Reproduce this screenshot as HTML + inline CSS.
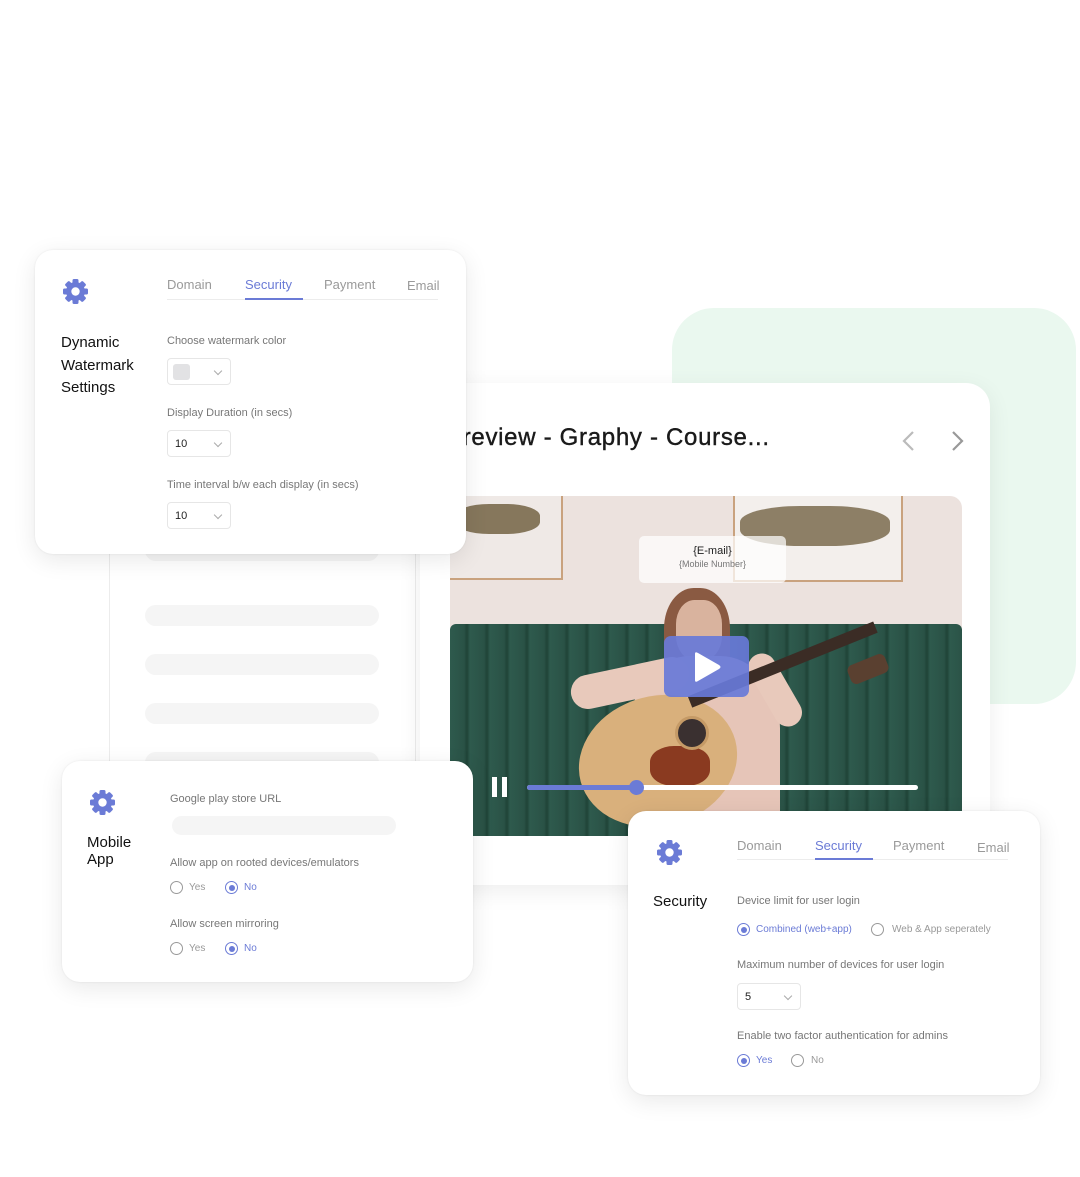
<!DOCTYPE html>
<html><head><meta charset="utf-8"><style>
*{box-sizing:border-box;margin:0;padding:0}
body{width:1080px;height:1177px;background:#fff;position:relative;overflow:hidden;font-family:"Liberation Sans","DejaVu Sans",sans-serif}
.abs{position:absolute}
.card{position:absolute;background:#fff;border-radius:18px;box-shadow:0 6px 24px rgba(0,0,0,.09),0 0 2px rgba(0,0,0,.08)}
.t{position:absolute;white-space:nowrap}
.lbl{font-size:11px;color:#777}
.tab{font-size:13px;color:#9a9a9a}
.tab.on{color:#6b7bd6}
.sel{position:absolute;width:64px;height:27px;border:1px solid #e6e6e6;border-radius:4px;background:#fff;font-size:11px;color:#222}
.sel span{position:absolute;left:7px;top:7px}
.chev{position:absolute;right:9px;top:9px;width:6px;height:6px;border-right:1px solid #aaa;border-bottom:1px solid #aaa;transform:rotate(45deg)}
.radio{position:absolute;width:13px;height:13px;border:1px solid #999;border-radius:50%}
.radio.on{border-color:#6b7bd6}
.radio.on:after{content:"";position:absolute;left:2.5px;top:2.5px;width:6px;height:6px;border-radius:50%;background:#6b7bd6}
.rt{position:absolute;font-size:10px;color:#999}
.rt.on{color:#6b7bd6}
.bar{position:absolute;background:#f5f5f5;border-radius:11px;height:21px}
.h{font-size:15px;color:#111;line-height:22.5px}
</style></head><body>

<div class="abs" style="left:672px;top:308px;width:404px;height:396px;background:#eaf8ef;border-radius:42px"></div>

<div class="abs" style="left:109px;top:530px;width:307px;height:250px;background:#fff;border:1px solid #ececec;border-top:none"></div>
<div class="bar" style="left:145px;top:540px;width:234px"></div>
<div class="bar" style="left:145px;top:605px;width:234px"></div>
<div class="bar" style="left:145px;top:654px;width:234px"></div>
<div class="bar" style="left:145px;top:703px;width:234px"></div>
<div class="bar" style="left:145px;top:752px;width:234px"></div>

<div class="card" style="left:420px;top:383px;width:570px;height:502px;border-radius:24px;box-shadow:0 6px 24px rgba(0,0,0,.07)"></div>
<div class="t" style="left:446px;top:424px;font-size:24px;color:#1a1a1a;letter-spacing:0.7px;-webkit-text-stroke:0.4px #1a1a1a">Preview - Graphy - Course...</div>
<svg class="abs" style="left:900px;top:430px" width="70" height="22"><path d="M13 2 L4 11 L13 20" stroke="#bbb" stroke-width="2.2" fill="none"/><path d="M53 2 L62 11 L53 20" stroke="#999" stroke-width="2.2" fill="none"/></svg>

<div class="abs" style="left:450px;top:496px;width:512px;height:340px;overflow:hidden;border-radius:0 12px 0 0;background:#ece2de">
  <div class="abs" style="left:-5px;top:-5px;width:118px;height:89px;border:2px solid #c9a27e;background:#efe9e6"></div>
  <div class="abs" style="left:5px;top:8px;width:85px;height:30px;background:#6b5a3a;border-radius:40%;opacity:.8"></div>
  <div class="abs" style="left:283px;top:-5px;width:170px;height:91px;border:2px solid #c9a27e;background:#f3efec"></div>
  <div class="abs" style="left:290px;top:10px;width:150px;height:40px;background:#6b5a3a;border-radius:40%;opacity:.75"></div>
  <div class="abs" style="left:0;top:128px;width:512px;height:212px;background:repeating-linear-gradient(90deg,#2e5a4d 0,#2a5246 14px,#1f4337 17px,#2e5a4d 20px);border-radius:6px 6px 0 0"></div>
  <div class="abs" style="left:214px;top:92px;width:66px;height:90px;background:#8a5a42;border-radius:45% 45% 20% 20%"></div>
  <div class="abs" style="left:226px;top:104px;width:46px;height:60px;background:#d9b39e;border-radius:40%"></div>
  <div class="abs" style="left:180px;top:160px;width:150px;height:180px;background:#e6c5b8;border-radius:40% 40% 10% 10%"></div>
  <div class="abs" style="left:120px;top:170px;width:120px;height:34px;background:#e8c9bb;border-radius:18px;transform:rotate(-12deg)"></div>
  <div class="abs" style="left:285px;top:180px;width:80px;height:28px;background:#e8c9bb;border-radius:14px;transform:rotate(60deg)"></div>
  <div class="abs" style="left:128px;top:200px;width:160px;height:130px;background:#d9b07c;border-radius:50%;transform:rotate(-15deg)"></div>
  <div class="abs" style="left:200px;top:250px;width:60px;height:40px;background:#8a3a20;border-radius:40%"></div>
  <div class="abs" style="left:225px;top:220px;width:34px;height:34px;background:#3a3030;border-radius:50%;border:3px solid #c59a66"></div>
  <div class="abs" style="left:240px;top:200px;width:200px;height:12px;background:#3b2c25;transform:rotate(-22deg);transform-origin:left"></div>
  <div class="abs" style="left:398px;top:163px;width:40px;height:20px;background:#5a4030;border-radius:6px;transform:rotate(-22deg)"></div>
  <div class="abs" style="left:189px;top:40px;width:147px;height:47px;background:rgba(255,255,255,.72);border-radius:5px;text-align:center">
    <div style="font-size:11px;color:#222;margin-top:9px">{E-mail}</div>
    <div style="font-size:9px;color:#777;margin-top:2px">{Mobile Number}</div>
  </div>
  <div class="abs" style="left:214px;top:140px;width:85px;height:61px;background:rgba(104,122,216,.92);border-radius:7px"></div>
  <svg class="abs" style="left:240px;top:154px" width="34" height="34"><path d="M5 4 Q5 1 8 3 L29 15 Q32 17 29 19 L8 31 Q5 33 5 30 Z" fill="#fff"/></svg>
  <div class="abs" style="left:42px;top:281px;width:5px;height:20px;background:#fff"></div>
  <div class="abs" style="left:52px;top:281px;width:5px;height:20px;background:#fff"></div>
  <div class="abs" style="left:77px;top:289px;width:391px;height:5px;background:#fff;border-radius:3px"></div>
  <div class="abs" style="left:77px;top:289px;width:110px;height:5px;background:#6b7bd6;border-radius:3px"></div>
  <div class="abs" style="left:179px;top:284px;width:15px;height:15px;background:#6b7bd6;border-radius:50%"></div>
</div>

<svg width="0" height="0" style="position:absolute"><defs>
<g id="gear" fill="#6b7bd6">
<circle cx="13.5" cy="13.5" r="9.5"/>
<rect x="10.5" y="1" width="6" height="25" rx="1.5"/>
<rect x="10.5" y="1" width="6" height="25" rx="1.5" transform="rotate(45 13.5 13.5)"/>
<rect x="10.5" y="1" width="6" height="25" rx="1.5" transform="rotate(90 13.5 13.5)"/>
<rect x="10.5" y="1" width="6" height="25" rx="1.5" transform="rotate(135 13.5 13.5)"/>
<circle cx="13.5" cy="13.5" r="4.2" fill="#fff"/>
</g>
</defs></svg>

<div class="card" style="left:35px;top:250px;width:431px;height:304px">
  <svg class="abs" style="left:27px;top:28px" width="27" height="27"><use href="#gear"/></svg>
  <div class="t tab" style="left:132px;top:27px">Domain</div>
  <div class="t tab on" style="left:210px;top:27px">Security</div>
  <div class="t tab" style="left:289px;top:27px">Payment</div>
  <div class="t tab" style="left:372px;top:28px">Email</div>
  <div class="abs" style="left:132px;top:49px;width:271px;height:1px;background:#ececec"></div>
  <div class="abs" style="left:210px;top:48px;width:58px;height:2px;background:#6b7bd6"></div>
  <div class="t h" style="left:26px;top:82px">Dynamic<br>Watermark<br>Settings</div>
  <div class="t lbl" style="left:132px;top:85px">Choose watermark color</div>
  <div class="sel" style="left:132px;top:108px"><div class="abs" style="left:5px;top:5px;width:17px;height:16px;background:#e2e2e4;border-radius:3px"></div><div class="chev"></div></div>
  <div class="t lbl" style="left:132px;top:157px">Display Duration (in secs)</div>
  <div class="sel" style="left:132px;top:180px"><span>10</span><div class="chev"></div></div>
  <div class="t lbl" style="left:132px;top:229px">Time interval b/w each display (in secs)</div>
  <div class="sel" style="left:132px;top:252px"><span>10</span><div class="chev"></div></div>
</div>

<div class="card" style="left:62px;top:761px;width:411px;height:221px">
  <svg class="abs" style="left:27px;top:28px" width="27" height="27"><use href="#gear"/></svg>
  <div class="t h" style="left:25px;top:73px;line-height:17px">Mobile<br>App</div>
  <div class="t lbl" style="left:108px;top:32px">Google play store URL</div>
  <div class="bar" style="left:110px;top:55px;width:224px;height:19px"></div>
  <div class="t lbl" style="left:108px;top:96px">Allow app on rooted devices/emulators</div>
  <div class="radio" style="left:108px;top:120px"></div><div class="rt" style="left:127px;top:121px">Yes</div>
  <div class="radio on" style="left:163px;top:120px"></div><div class="rt on" style="left:182px;top:121px">No</div>
  <div class="t lbl" style="left:108px;top:157px">Allow screen mirroring</div>
  <div class="radio" style="left:108px;top:181px"></div><div class="rt" style="left:127px;top:182px">Yes</div>
  <div class="radio on" style="left:163px;top:181px"></div><div class="rt on" style="left:182px;top:182px">No</div>
</div>

<div class="card" style="left:628px;top:811px;width:412px;height:284px">
  <svg class="abs" style="left:28px;top:28px" width="27" height="27"><use href="#gear"/></svg>
  <div class="t tab" style="left:109px;top:27px">Domain</div>
  <div class="t tab on" style="left:187px;top:27px">Security</div>
  <div class="t tab" style="left:265px;top:27px">Payment</div>
  <div class="t tab" style="left:349px;top:29px">Email</div>
  <div class="abs" style="left:109px;top:48px;width:271px;height:1px;background:#ececec"></div>
  <div class="abs" style="left:187px;top:47px;width:58px;height:2px;background:#6b7bd6"></div>
  <div class="t h" style="left:25px;top:80px">Security</div>
  <div class="t lbl" style="left:109px;top:84px">Device limit for user login</div>
  <div class="radio on" style="left:109px;top:112px"></div><div class="rt on" style="left:128px;top:113px">Combined (web+app)</div>
  <div class="radio" style="left:243px;top:112px"></div><div class="rt" style="left:264px;top:113px">Web &amp; App seperately</div>
  <div class="t lbl" style="left:109px;top:148px">Maximum number of devices for user login</div>
  <div class="sel" style="left:109px;top:172px"><span>5</span><div class="chev"></div></div>
  <div class="t lbl" style="left:109px;top:219px">Enable two factor authentication for admins</div>
  <div class="radio on" style="left:109px;top:243px"></div><div class="rt on" style="left:128px;top:244px">Yes</div>
  <div class="radio" style="left:163px;top:243px"></div><div class="rt" style="left:183px;top:244px">No</div>
</div>

</body></html>
